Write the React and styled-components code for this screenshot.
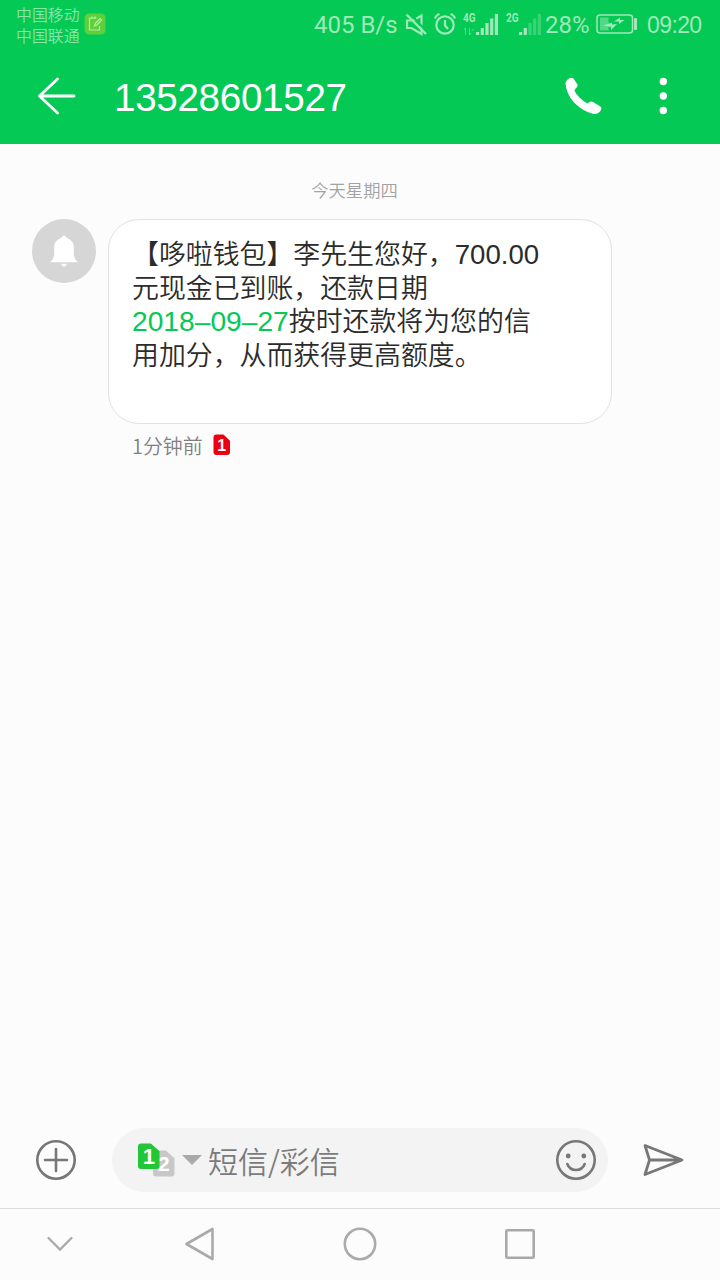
import React from 'react';
import styled, { createGlobalStyle } from 'styled-components';

const GlobalStyle = createGlobalStyle`
  * { box-sizing: border-box; }
  body {
    margin: 0;
    background: #fcfcfc;
    font-family: "Liberation Sans", "Noto Sans CJK SC", sans-serif;
  }
  svg { display: block; flex: none; overflow: visible; }
`;

const Screen = styled.div`
  display: flex;
  flex-direction: column;
  width: 720px;
  height: 1280px;
  overflow: hidden;
  background: #fcfcfc;
`;

const Header = styled.header`
  height: 144px;
  flex: none;
  background: #04c955;
  color: #fff;
`;

const StatusBar = styled.div`
  display: flex;
  align-items: center;
  height: 48px;
  padding: 0 0 0 16px;
  color: #a0e8b8;
`;

const Carriers = styled.div`
  width: 68px;
  padding-top: 3px;
  font: 350 15.9px/21px "Liberation Sans", "Noto Sans CJK SC", sans-serif;
  color: #8ae5a9;
  white-space: nowrap;
`;

const StatusCell = styled.div`
  display: flex;
  align-items: center;
  height: 48px;
  width: ${(p) => p.$w}px;
  flex: none;
  white-space: nowrap;
  padding-top: ${(p) => p.$top || 0}px;
  font-family: ${(p) => p.$font || 'Roboto'}, sans-serif;
  font-size: ${(p) => p.$size || 24}px;
  letter-spacing: ${(p) => p.$track || 0}px;
  font-weight: ${(p) => p.$weight || 400};
`;

const Spacer = styled.div`
  flex: 1;
`;

const AppBar = styled.div`
  display: flex;
  align-items: center;
  height: 96px;
  padding: 0 53px 0 36px;
`;

const Title = styled.h1`
  flex: 1;
  margin: 0 0 0 36px;
  padding-top: 3px;
  font-size: 38.6px;
  font-weight: 400;
  line-height: 48px;
  letter-spacing: -0.3px;
`;

const DotsButton = styled.div`
  margin-left: 55px;
`;

const Conversation = styled.main`
  flex: 1;
  padding: 33px 0 0 32px;
`;

const DateLabel = styled.div`
  width: 645px;
  height: 42px;
  font: 350 17.3px/25px "Noto Sans CJK SC", sans-serif;
  color: #a3a3a3;
  text-align: center;
`;

const MessageRow = styled.div`
  display: flex;
  gap: 12px;
`;

const Avatar = styled.div`
  display: flex;
  align-items: center;
  justify-content: center;
  width: 64px;
  height: 64px;
  border-radius: 50%;
  background: #d6d6d6;
`;

const Bubble = styled.div`
  width: 504px;
  height: 205px;
  padding: 19px 23px 0;
  border: 1px solid #e2e2e2;
  border-radius: 31px;
  background: #fff;
  color: #2b2b2b;
  font-size: 26.9px;
  font-weight: 350;
  line-height: 33.7px;
  white-space: nowrap;
`;

const DateLink = styled.span`
  color: #04c955;
  font-size: 28.2px;
  line-height: 1;
`;

const Amount = styled.span`
  font-size: 27.6px;
  line-height: 1;
`;

const Meta = styled.div`
  display: flex;
  align-items: center;
  gap: 10px;
  margin: 5px 0 0 24px;
  color: #808080;
  font: 350 19.9px/34px "Noto Sans CJK SC", sans-serif;
`;

const Composer = styled.footer`
  display: flex;
  align-items: center;
  height: 96px;
  padding: 0 34px 0 35px;
`;

const InputPill = styled.div`
  display: flex;
  align-items: center;
  width: 496px;
  height: 64px;
  margin: 0 34px 0 35px;
  padding: 0 11px 0 26px;
  border-radius: 32px;
  background: #f3f3f3;
`;

const Placeholder = styled.div`
  flex: 1;
  color: #7b7b7b;
  font: 350 30px/44px "Noto Sans CJK SC", sans-serif;
  white-space: nowrap;
`;

const NavBar = styled.nav`
  display: flex;
  align-items: center;
  height: 72px;
  padding: 0 180px 2px 40px;
  border-top: 1px solid #dcdcdc;
`;

const NavKeys = styled.div`
  display: flex;
  gap: 120px;
  margin-left: 100px;
`;

const Svg = ({ w, h, children }) => (
  <svg width={w} height={h} viewBox={`0 0 ${w} ${h}`} fill="none">
    {children}
  </svg>
);

const NoteIcon = () => (
  <Svg w={22} h={24}>
    <rect x="0.5" y="1.5" width="21" height="21" rx="4.5" fill="#60cf3c" />
    <path d="M12.5 6H5.500v12h10v-4M8 4.500v2.500M11 4.500v2.500M10.500 14l1-3 4.500-4.500 1.500 1.500-4.500 5z" stroke="#b6eda0" strokeWidth="1.2" />
  </Svg>
);

const MuteIcon = () => (
  <Svg w={23} h={24}>
    <path d="M2 8.500V16h4.500l10 6V3.500L8.500 8.500z" stroke="currentColor" strokeWidth="2.200" />
    <path d="M5 1.500L23 21" stroke="#04c955" strokeWidth="2" />
    <path d="M1.500 2.500L21 22" stroke="currentColor" strokeWidth="2.400" />
  </Svg>
);

const AlarmIcon = () => (
  <Svg w={23} h={24}>
    <circle cx="11" cy="13" r="8.700" stroke="currentColor" strokeWidth="2.200" />
    <path d="M11 8v5.500l3 3.500M1 6.500Q2 3 5.500 2M16.500 2q3.500 1 4.500 4.500" stroke="currentColor" strokeWidth="2.200" />
  </Svg>
);

const Signal = ({ label, strength, data }) => (
  <Svg w={38} h={28}>
    <text x="0" y="12" fontSize="12" fontWeight="700" fontFamily="Roboto" textLength="12.500" lengthAdjust="spacingAndGlyphs" fill="currentColor">{label}</text>
    {data && <path d="M2.500 18v7M1 20l1.500-2M6.500 18v7l1.500-2M9 20h2" stroke="currentColor" opacity=".5" />}
    {[3, 7, 12, 16.5, 21].map((h, i) => (
      <rect key={h} x={13 + i * 4.7} y={25 - h} width="3.2" height={h} fill="currentColor" opacity={i < strength ? 1 : 0.35} />
    ))}
  </Svg>
);

const BatteryIcon = () => (
  <Svg w={42} h={22}>
    <rect x="1" y="2" width="35.5" height="18" rx="3" stroke="currentColor" strokeWidth="1.500" />
    <rect x="4" y="4.500" width="8.500" height="13" fill="currentColor" opacity=".5" />
    <path d="M7 12.500L16 9.500v2l5-.5-6 6v-3zM18 8.500l6-4v2.500h4.500l-5.500 4v-2.500z" fill="currentColor" />
    <rect x="38" y="5" width="3" height="12" rx="1" fill="currentColor" />
  </Svg>
);

const BackIcon = () => (
  <Svg w={42} h={42}>
    <path d="M21.500 4L3.500 21l18 17M3.500 21H38" stroke="#fff" strokeWidth="2.800" strokeLinecap="round" strokeLinejoin="round" />
  </Svg>
);

const PhoneIcon = () => (
  <Svg w={40} h={40}>
    <path d="M1.500 7Q2.500 3 7 1.800Q9.500 1.500 10.500 4L13.500 8.500Q14 10 13 11L10.500 14Q11 17 15.500 21.500Q20 26 23.500 27.500L26 25.800Q27.500 25 29 26L36.500 30.500Q38.200 32 37 34Q34.500 38.500 29.500 38Q19 35.500 10 26.500Q2 17.500 1.500 7z" fill="#fff" />
  </Svg>
);

const MoreIcon = () => (
  <Svg w={8} h={40}>
    {[5.5, 20, 34.5].map((y) => <circle key={y} cx="4.3" cy={y} r="3.7" fill="#fff" />)}
  </Svg>
);

const BellIcon = () => (
  <Svg w={30} h={34}>
    <path d="M1 28.300Q5 25 5.200 20V13C5.200 8.500 8 5.500 12 4Q15 -1 18 4C22 5.500 24.800 8.500 24.800 13V20Q25 25 29 28.300z" fill="#fff" />
    <path d="M12 29.800h6c-.5 2-1.500 2.600-3 2.600s-2.500-.6-3-2.600z" fill="#fff" />
  </Svg>
);

const SimGlyph = ({ fill, digit, x = 0, y = 0, w, h, size }) => (
  <g transform={`translate(${x} ${y})`}>
    <path d={`M3 0H${w * 0.6}L${w} ${h * 0.3}V${h - 3}q0 3-3 3H3q-3 0-3-3V3q0-3 3-3z`} fill={fill} />
    <text x={w / 2} y={h / 2 + size * 0.36} textAnchor="middle" fontFamily="Liberation Sans" fontWeight="700" fontSize={size} fill="#fff">{digit}</text>
  </g>
);

const DualSimIcon = () => (
  <Svg w={38} h={36}>
    <SimGlyph fill="#c8c8c8" digit="2" x={15} y={8.5} w={21.5} h={26} size={21} />
    <SimGlyph fill="#20c838" digit="1" x={0} y={1.5} w={21.5} h={25.5} size={22} />
  </Svg>
);

const PlusIcon = () => (
  <Svg w={42} h={42}>
    <circle cx="21" cy="21" r="18.7" stroke="#777" strokeWidth="2.6" />
    <path d="M21 10v22M10 21h22" stroke="#777" strokeWidth="2.6" strokeLinecap="round" />
  </Svg>
);

const SmileIcon = () => (
  <Svg w={42} h={42}>
    <circle cx="21" cy="21" r="18.7" stroke="#777" strokeWidth="2.6" />
    <circle cx="13.2" cy="17" r="2.4" fill="#777" />
    <circle cx="28.8" cy="17" r="2.4" fill="#777" />
    <path d="M12.300 25c3 8 14.400 8 17.400 0" stroke="#777" strokeWidth="2.6" strokeLinecap="round" />
  </Svg>
);

const SendIcon = () => (
  <Svg w={42} h={36}>
    <path d="M3 3.500L40 18 3 32.500 7.500 18zM7.500 18H40" stroke="#777" strokeWidth="2.8" strokeLinejoin="round" />
  </Svg>
);

export default function App() {
  return (
    <Screen>
      <GlobalStyle />
      <Header>
        <StatusBar>
          <Carriers>
            <div>中国移动</div>
            <div>中国联通</div>
          </Carriers>
          <NoteIcon />
          <Spacer />
          <StatusCell $w={91} $size={24} $top={1}>405 B/s</StatusCell>
          <StatusCell $w={29}><MuteIcon /></StatusCell>
          <StatusCell $w={29}><AlarmIcon /></StatusCell>
          <StatusCell $w={43}><Signal label="4G" strength={5} data /></StatusCell>
          <StatusCell $w={39}><Signal label="2G" strength={2} /></StatusCell>
          <StatusCell $w={51} $size={24} $top={1}>28%</StatusCell>
          <StatusCell $w={51}><BatteryIcon /></StatusCell>
          <StatusCell $w={73} $size={23} $top={3} $track={-0.6} $font={'"Liberation Sans"'}>09:20</StatusCell>
        </StatusBar>
        <AppBar>
          <BackIcon />
          <Title>13528601527</Title>
          <PhoneIcon />
          <DotsButton><MoreIcon /></DotsButton>
        </AppBar>
      </Header>

      <Conversation>
        <DateLabel>今天星期四</DateLabel>
        <MessageRow>
          <Avatar><BellIcon /></Avatar>
          <div>
            <Bubble>
              <div>【哆啦钱包】李先生您好，<Amount>700.00</Amount></div>
              <div>元现金已到账，还款日期</div>
              <div><DateLink>2018–09–27</DateLink>按时还款将为您的信</div>
              <div>用加分，从而获得更高额度。</div>
            </Bubble>
            <Meta>
              1分钟前
              <Svg w={18} h={24}>
                <SimGlyph fill="#ec0010" digit="1" x={0.5} y={0.5} w={16.5} h={20.5} size={16} />
              </Svg>
            </Meta>
          </div>
        </MessageRow>
      </Conversation>

      <Composer>
        <PlusIcon />
        <InputPill>
          <DualSimIcon />
          <Svg w={32} h={12}>
            <path d="M6 1h20L16 11z" fill="#a9a9a9" />
          </Svg>
          <Placeholder>短信/彩信</Placeholder>
          <SmileIcon />
        </InputPill>
        <SendIcon />
      </Composer>
      <NavBar>
        <Svg w={40} h={40}>
          <path d="M8.500 14L20 25.500 31.500 14" stroke="#aaa" strokeWidth="2.3" strokeLinecap="round" />
        </Svg>
        <NavKeys>
          <Svg w={40} h={40}>
            <path d="M32.500 5v30L6.500 20z" stroke="#aaa" strokeWidth="2.6" strokeLinejoin="round" />
          </Svg>
          <Svg w={40} h={40}>
            <circle cx="20" cy="20" r="15.2" stroke="#aaa" strokeWidth="2.6" />
          </Svg>
          <Svg w={40} h={40}>
            <rect x="6.3" y="6.3" width="27.4" height="27.4" rx="1" stroke="#aaa" strokeWidth="2.6" />
          </Svg>
        </NavKeys>
      </NavBar>
    </Screen>
  );
}
